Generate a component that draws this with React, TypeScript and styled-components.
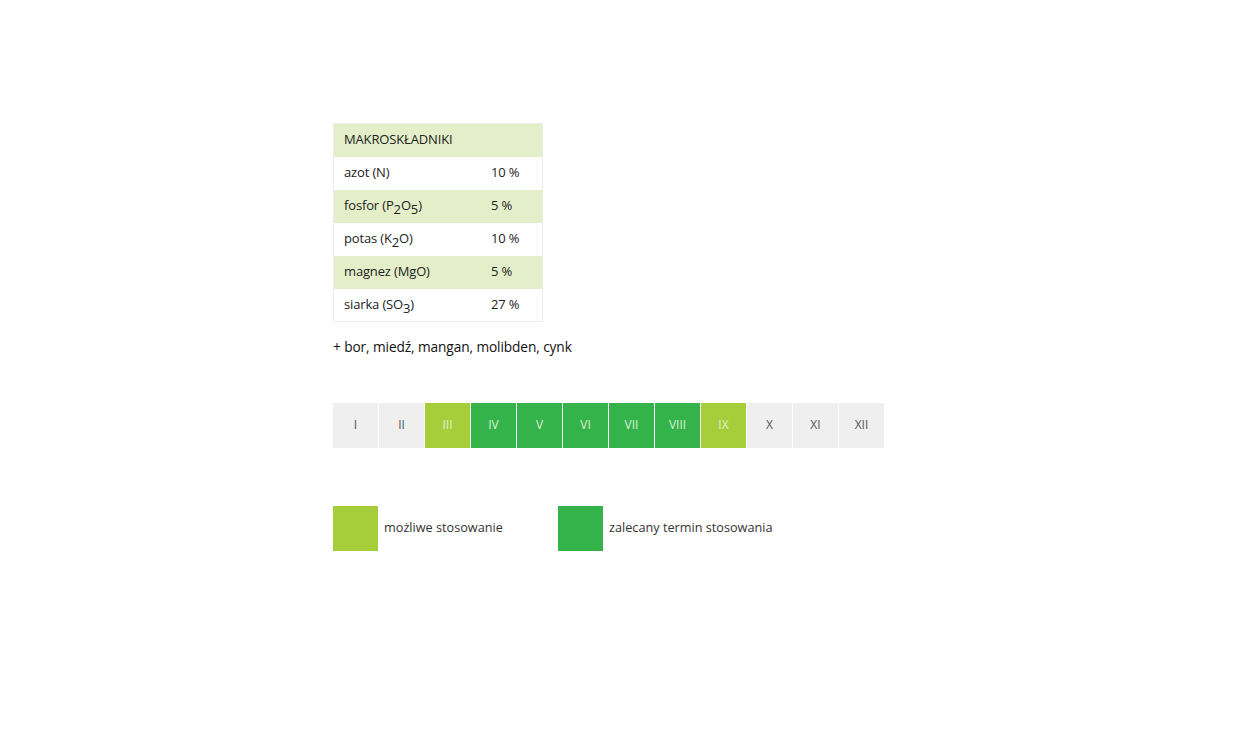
import React from "react";
import styled, { createGlobalStyle } from "styled-components";

const Global = createGlobalStyle`
  html, body { margin: 0; padding: 0; background: #ffffff; }
  body { font-family: "Open Sans", "Noto Sans", sans-serif; color: #222; }
`;

const Page = styled.div`
  padding: 123px 0 0 333px;
  min-height: 751px;
  box-sizing: border-box;
`;

const Table = styled.table`
  border-collapse: collapse;
  width: 210px;
  border: 1px solid #ececec;
  font-size: 13px;
  letter-spacing: -0.15px;
`;

const Row = styled.tr<{ $green?: boolean }>`
  height: 33px;
  background: ${(p) => (p.$green ? "#e4efca" : "#ffffff")};
`;

const Cell = styled.td`
  padding: 0 0 2px 10px;
  vertical-align: middle;
  color: #222;
`;

const ValueCell = styled.td`
  width: 51px;
  padding: 0 0 2px;
  vertical-align: middle;
  color: #222;
`;

const Sub = styled.sub`
  font-size: 13px;
  vertical-align: -4px;
  line-height: 0;
`;

const Extra = styled.p`
  margin: 15px 0 0;
  font-size: 13.7px;
  letter-spacing: -0.1px;
  color: #111;
`;

const Months = styled.div`
  display: flex;
  gap: 1px;
  margin-top: 47px;
`;

const Month = styled.div<{ $kind: "off" | "maybe" | "rec" }>`
  width: 45px;
  height: 45px;
  display: flex;
  align-items: center;
  justify-content: center;
  padding-bottom: 2px;
  box-sizing: border-box;
  font-size: 12px;
  background: ${(p) =>
    p.$kind === "off" ? "#efefef" : p.$kind === "maybe" ? "#a6ce3a" : "#34b34a"};
  color: ${(p) => (p.$kind === "off" ? "#555" : "#dcefd6")};
`;

const Legend = styled.div`
  display: flex;
  margin-top: 58px;
`;

const LegendItem = styled.div`
  display: flex;
  align-items: center;
  gap: 6px;
  width: 225px;
`;

const Swatch = styled.div<{ $color: string }>`
  width: 45px;
  height: 45px;
  background: ${(p) => p.$color};
`;

const LegendText = styled.span`
  font-size: 12.7px;
  color: #333;
  padding-bottom: 3px;
`;

const rows: { label: React.ReactNode; value: string }[] = [
  { label: "azot (N)", value: "10 %" },
  { label: <>fosfor (P<Sub>2</Sub>O<Sub>5</Sub>)</>, value: "5 %" },
  { label: <>potas (K<Sub>2</Sub>O)</>, value: "10 %" },
  { label: "magnez (MgO)", value: "5 %" },
  { label: <>siarka (SO<Sub>3</Sub>)</>, value: "27 %" },
];

const months: { n: string; k: "off" | "maybe" | "rec" }[] = [
  { n: "I", k: "off" },
  { n: "II", k: "off" },
  { n: "III", k: "maybe" },
  { n: "IV", k: "rec" },
  { n: "V", k: "rec" },
  { n: "VI", k: "rec" },
  { n: "VII", k: "rec" },
  { n: "VIII", k: "rec" },
  { n: "IX", k: "maybe" },
  { n: "X", k: "off" },
  { n: "XI", k: "off" },
  { n: "XII", k: "off" },
];

export default function App() {
  return (
    <Page>
      <Global />
      <Table>
        <tbody>
          <Row $green>
            <Cell colSpan={2}>MAKROSKŁADNIKI</Cell>
          </Row>
          {rows.map((r, i) => (
            <Row key={i} $green={i % 2 === 1}>
              <Cell>{r.label}</Cell>
              <ValueCell>{r.value}</ValueCell>
            </Row>
          ))}
        </tbody>
      </Table>
      <Extra>+ bor, miedź, mangan, molibden, cynk</Extra>
      <Months>
        {months.map((m) => (
          <Month key={m.n} $kind={m.k}>
            {m.n}
          </Month>
        ))}
      </Months>
      <Legend>
        <LegendItem>
          <Swatch $color="#a6ce3a" />
          <LegendText>możliwe stosowanie</LegendText>
        </LegendItem>
        <LegendItem>
          <Swatch $color="#34b34a" />
          <LegendText>zalecany termin stosowania</LegendText>
        </LegendItem>
      </Legend>
    </Page>
  );
}
